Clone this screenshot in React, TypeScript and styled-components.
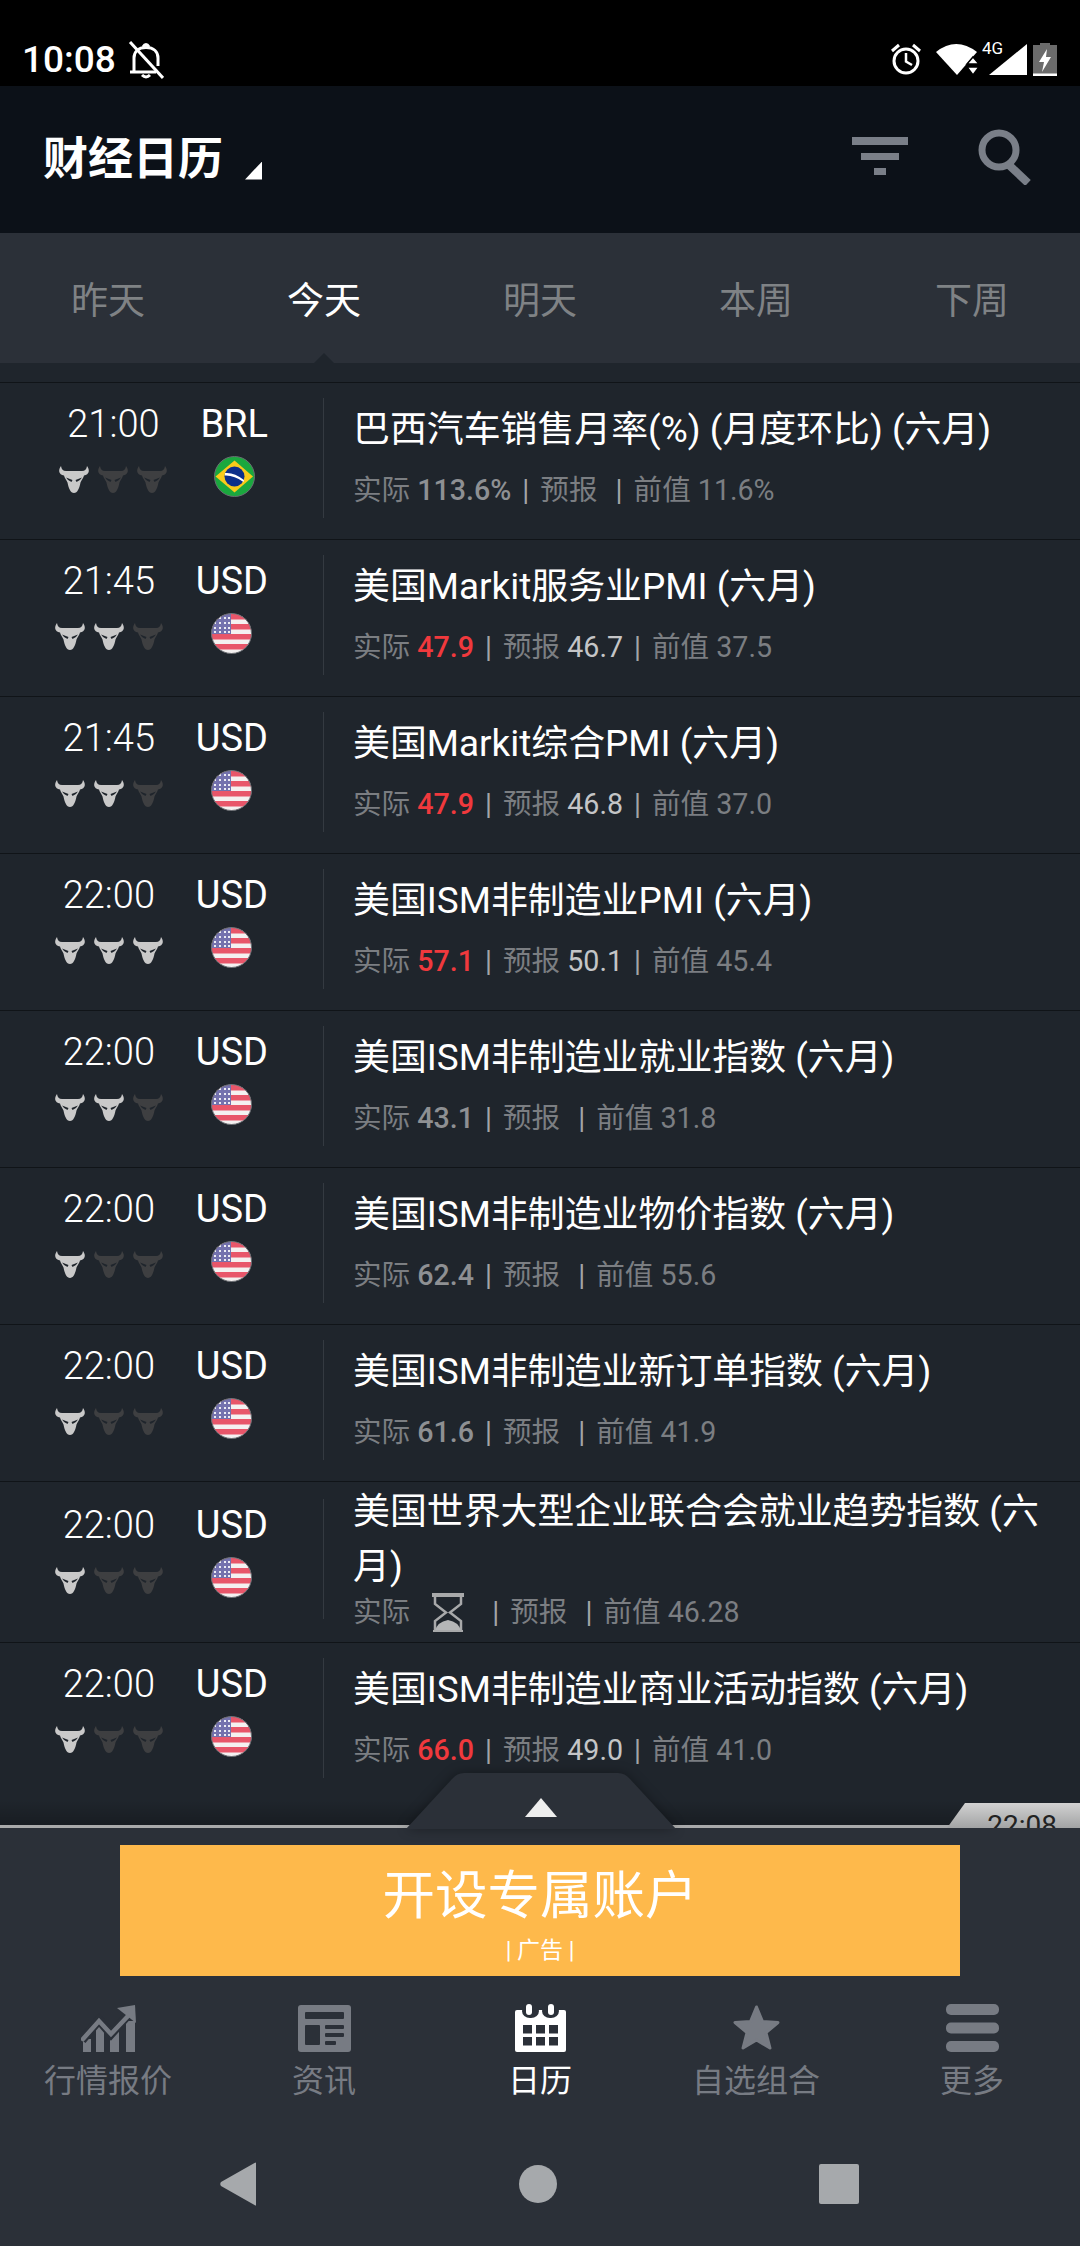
import React from 'react';
import styled, { createGlobalStyle } from 'styled-components';

const Global = createGlobalStyle`
  html, body {
    margin: 0;
    padding: 0;
    background: #000;
  }
  * {
    box-sizing: border-box;
  }
`;

const Page = styled.div`
  width: 1080px;
  height: 2246px;
  display: flex;
  flex-direction: column;
  overflow: hidden;
  background: #1f252c;
  font-family: Roboto, 'Noto Sans CJK SC', sans-serif;
`;

const StatusBar = styled.div`
  height: 86px;
  flex: none;
  background: #000;
  color: #fff;
  display: flex;
  align-items: flex-start;
  justify-content: space-between;
  padding: 41px 23px 0 22px;
`;

const StatusLeft = styled.div`
  display: flex;
  align-items: center;
  gap: 12px;
  font-size: 37px;
  font-weight: 500;
  line-height: 38px;
`;

const StatusRight = styled.div`
  display: flex;
  align-items: flex-start;
  margin-top: 1px;
`;

const Header = styled.header`
  height: 147px;
  flex: none;
  background: #0c1118;
  display: flex;
  align-items: center;
  padding: 0 48px 0 43px;
`;

const HeaderTitle = styled.h1`
  margin: 0;
  font-size: 45px;
  font-weight: 700;
  color: #fff;
  line-height: 54px;
`;

const Caret = styled.span`
  width: 17px;
  height: 18px;
  margin: 22px auto 0 22px;
  background: #fff;
  clip-path: polygon(100% 0, 100% 100%, 0 100%);
`;

const HeaderIcons = styled.div`
  display: flex;
  align-items: center;
  gap: 70px;
  margin-bottom: 5px;
`;

const DateTabs = styled.nav`
  height: 130px;
  flex: none;
  background: #2b3038;
  display: flex;
  position: relative;
`;

const DateTab = styled.div<{ $active?: boolean }>`
  flex: 1;
  display: flex;
  align-items: center;
  justify-content: center;
  font-size: 37px;
  color: ${({ $active }) => ($active ? '#fff' : '#7f8285')};
  position: relative;

  ${({ $active }) =>
    $active &&
    `&::after {
      content: '';
      position: absolute;
      bottom: 0;
      left: 50%;
      margin-left: -10px;
      width: 20px;
      height: 10px;
      background: #1f252c;
      clip-path: polygon(50% 0, 100% 100%, 0 100%);
    }`}
`;

const List = styled.div`
  flex: 1;
  min-height: 0;
  overflow: hidden;
  padding-top: 19px;
  background: #1f252c;
`;

const Row = styled.div<{ $tall?: boolean }>`
  min-height: ${({ $tall }) => ($tall ? '161px' : '157px')};
  border-top: 1px solid #101418;
  padding-bottom: 6px;
  display: flex;
  align-items: center;
`;

const Meta = styled.div`
  width: 323px;
  flex: none;
  padding-right: 55px;
  display: flex;
  justify-content: flex-end;
  gap: 32px;
`;

const MetaCol = styled.div`
  display: flex;
  flex-direction: column;
  align-items: center;
`;

const Time = styled.div`
  font-size: 38px;
  font-weight: 300;
  line-height: 44px;
  color: #fff;
`;

const Currency = styled.div`
  font-size: 38px;
  line-height: 44px;
  color: #fff;
`;

const Bulls = styled.div`
  display: flex;
  gap: 7px;
  margin-top: 20px;
  margin-bottom: 21px;
`;

const FlagWrap = styled.div`
  margin-top: 10px;
  margin-bottom: 1px;
  width: 41px;
  height: 41px;
`;

const Divider = styled.div`
  width: 1px;
  height: 120px;
  flex: none;
  background: #343a41;
`;

const Content = styled.div<{ $tall?: boolean }>`
  flex: 1;
  padding: 0 0 ${({ $tall }) => ($tall ? '5px' : '7px')} 29px;
  display: flex;
  flex-direction: column;
  gap: ${({ $tall }) => ($tall ? '0' : '15px')};
`;

const Title = styled.div`
  font-size: 36.9px;
  line-height: 55px;
  color: #fff;
  padding-right: 20px;
`;

const Sub = styled.div`
  font-size: 28.6px;
  line-height: 36px;
  color: #7b7e82;
  white-space: pre;
`;

const Val = styled.span<{ $tone?: 'red' | 'bright' | 'dim' }>`
  color: ${({ $tone }) =>
    $tone === 'red' ? '#f0393d' : $tone === 'bright' ? '#c4c5c7' : $tone === 'dim' ? '#8e9093' : '#7b7e82'};
  font-weight: ${({ $tone }) => ($tone === 'red' || $tone === 'dim' ? 500 : 400)};
`;

const Bar = styled.span`
  color: #a3a5a8;
  margin: 0 11px;
`;

const Glass = styled.svg`
  width: 32px;
  height: 39px;
  margin: -8px 17px -6px 22px;
  vertical-align: middle;
`;

const Panel = styled.div`
  height: 418px;
  flex: none;
  background: #2b3038;
  display: flex;
  flex-direction: column;
  position: relative;

  &::before {
    content: '';
    position: absolute;
    left: 0;
    right: 0;
    top: -3px;
    height: 3px;
    background: #a9aaab;
  }
  &::after {
    content: '';
    position: absolute;
    left: 0;
    right: 0;
    top: -28px;
    height: 25px;
    background: linear-gradient(rgba(0, 0, 0, 0), rgba(0, 0, 0, 0.22));
  }
`;

const Handle = styled.svg`
  position: absolute;
  top: -55px;
  left: 406px;
  width: 270px;
  height: 56px;
  z-index: 2;
  overflow: visible;
  filter: drop-shadow(0 0 6px rgba(0, 0, 0, 0.35));
`;

const ClockTag = styled.div`
  position: absolute;
  top: -25px;
  right: 0;
  width: 133px;
  height: 25px;
  overflow: hidden;
  z-index: 2;
  background: linear-gradient(#d2d2d2, #a2a3a4);
  clip-path: polygon(18px 0, 100% 0, 100% 100%, 0 100%);
  font-size: 28px;
  line-height: 34px;
  color: #222;
  padding: 6px 23px 0 0;
  text-align: right;
`;

const Ad = styled.div`
  width: 840px;
  height: 131px;
  margin: 17px auto 0;
  background: #feb94b;
  color: #fff;
  flex: none;
  display: flex;
  flex-direction: column;
  align-items: center;
`;

const AdTitle = styled.div`
  font-size: 52.5px;
  line-height: 60px;
  margin-top: 21px;
`;

const AdNote = styled.div`
  font-size: 23px;
  line-height: 24px;
  margin-top: 13px;
`;

const BottomTabs = styled.nav`
  display: flex;
  flex: none;
  padding-top: 27px;
`;

const BottomTab = styled.div<{ $active?: boolean }>`
  flex: 1;
  display: flex;
  flex-direction: column;
  align-items: center;
  color: ${({ $active }) => ($active ? '#fff' : '#777b83')};
  font-size: 32px;
  line-height: 40px;
`;

const TabIcon = styled.div`
  height: 50px;
  margin-bottom: 8px;
  display: flex;
  align-items: center;
`;

const SystemNav = styled.div`
  flex: 1;
  display: flex;
  align-items: center;
  justify-content: center;
  gap: 262px;
  padding: 21px 1px 0 0;
`;

const Bull = ({ on }: { on: boolean }) => (
  <svg width="32" height="28" viewBox="0 0 32 28">
    <path
      fill={on ? '#c9c9c9' : '#3e3f41'}
      d="M3 0C0 4 0.5 8.5 6 9.5C6.5 12 8.5 14 9.5 16.5C10.5 22 12.5 27 16 27C19.5 27 21.5 22 22.5 16.5C23.5 14 25.5 12 26 9.5C31.5 8.5 32 4 29 0C28.5 3.5 27 5 24 5L8 5C5 5 3.5 3.5 3 0Z"
    />
    <path fill="#1f252c" d="M8 11.5L14.5 14L13.5 16Q10 15 8 11.5ZM24 11.5L17.5 14L18.5 16Q22 15 24 11.5Z" />
  </svg>
);

const UsFlag = () => (
  <svg width="41" height="41" viewBox="0 0 41 41">
    <defs>
      <clipPath id="usclip">
        <circle cx="20.5" cy="20.5" r="20" />
      </clipPath>
    </defs>
    <g clipPath="url(#usclip)">
      <rect width="41" height="41" fill="#f4f1f1" />
      {[1, 11, 21, 31].map((y) => (
        <rect key={y} x="0" y={y} width="41" height="5.5" fill="#e8566a" />
      ))}
      <rect width="20" height="21" fill="#7472ae" />
      {[4, 9, 14, 18].map((y) =>
        [3, 8, 13, 17].map((x) => <rect key={`${x}-${y}`} x={x} y={y} width="2" height="2" fill="#ececf4" />)
      )}
    </g>
    <circle cx="20.5" cy="20.5" r="20" fill="none" stroke="#6a6d72" strokeWidth="1" />
  </svg>
);

const BrFlag = () => (
  <svg width="41" height="41" viewBox="0 0 41 41">
    <circle cx="20.5" cy="20.5" r="20" fill="#1aa83e" stroke="#6a6d72" strokeWidth="1" />
    <path d="M20.5 4.5L39 20.5L20.5 36.5L1.5 20.5Z" fill="#f9cb1a" />
    <circle cx="20.5" cy="20.5" r="10" fill="#0c2f8a" />
    <path d="M11 17Q20 16 30 24L29.5 26Q20 19 10.8 19.5Z" fill="#fff" />
  </svg>
);

const HourGlass = () => (
  <Glass viewBox="0 0 32 39">
    <rect x="0" y="0" width="32" height="4" fill="#a8a9aa" />
    <path d="M3 4V11L14 19.5L3 28V38M29 4V11L18 19.5L29 28V38" fill="none" stroke="#a8a9aa" strokeWidth="2.5" />
    <path d="M3 38Q5 29 16 27Q27 29 29 38Z" fill="#b5b6b7" />
    <rect x="1" y="37" width="30" height="2" fill="#a8a9aa" />
  </Glass>
);

type Item = {
  time: string;
  cur: 'BRL' | 'USD';
  level: number;
  title: string;
  actual: string;
  hot?: boolean;
  forecast?: string;
  prev: string;
  pending?: boolean;
};

const items: Item[] = [
  { time: '21:00', cur: 'BRL', level: 1, title: '巴西汽车销售月率(%) (月度环比) (六月)', actual: '113.6%', prev: '11.6%' },
  { time: '21:45', cur: 'USD', level: 2, title: '美国Markit服务业PMI (六月)', actual: '47.9', hot: true, forecast: '46.7', prev: '37.5' },
  { time: '21:45', cur: 'USD', level: 2, title: '美国Markit综合PMI (六月)', actual: '47.9', hot: true, forecast: '46.8', prev: '37.0' },
  { time: '22:00', cur: 'USD', level: 3, title: '美国ISM非制造业PMI (六月)', actual: '57.1', hot: true, forecast: '50.1', prev: '45.4' },
  { time: '22:00', cur: 'USD', level: 2, title: '美国ISM非制造业就业指数 (六月)', actual: '43.1', prev: '31.8' },
  { time: '22:00', cur: 'USD', level: 1, title: '美国ISM非制造业物价指数 (六月)', actual: '62.4', prev: '55.6' },
  { time: '22:00', cur: 'USD', level: 1, title: '美国ISM非制造业新订单指数 (六月)', actual: '61.6', prev: '41.9' },
  { time: '22:00', cur: 'USD', level: 1, title: '美国世界大型企业联合会就业趋势指数 (六月)', actual: '', prev: '46.28', pending: true },
  { time: '22:00', cur: 'USD', level: 1, title: '美国ISM非制造业商业活动指数 (六月)', actual: '66.0', hot: true, forecast: '49.0', prev: '41.0' },
];

const EventRow = ({ item }: { item: Item }) => (
  <Row $tall={item.pending}>
    <Meta>
      <MetaCol>
        <Time>{item.time}</Time>
        <Bulls>
          {[1, 2, 3].map((n) => (
            <Bull key={n} on={n <= item.level} />
          ))}
        </Bulls>
      </MetaCol>
      <MetaCol>
        <Currency>{item.cur}</Currency>
        <FlagWrap>{item.cur === 'BRL' ? <BrFlag /> : <UsFlag />}</FlagWrap>
      </MetaCol>
    </Meta>
    <Divider />
    <Content $tall={item.pending}>
      <Title>{item.title}</Title>
      <Sub>
        实际
        {item.pending ? <HourGlass /> : ' '}
        {!item.pending && <Val $tone={item.hot ? 'red' : 'dim'}>{item.actual}</Val>}
        <Bar>|</Bar>预报 {item.forecast && <Val $tone="bright">{item.forecast}</Val>}
        <Bar>|</Bar>前值 <Val>{item.prev}</Val>
      </Sub>
    </Content>
  </Row>
);

export default function App() {
  return (
    <Page>
      <Global />
      <StatusBar>
        <StatusLeft>
          10:08
          <svg width="36" height="38" viewBox="0 0 36 38" fill="none" stroke="#fff" strokeWidth="3">
            <path d="M2 31H28M6 30V17C6 11 10 6.5 18 6.5C26 6.5 30 11 30 17V25" />
            <path d="M14 34Q18 38 22 34" />
            <path d="M15 6Q18 1 21 6" />
            <path d="M2 1L35 37" />
          </svg>
        </StatusLeft>
        <StatusRight>
          <svg width="34" height="34" viewBox="0 0 34 34" fill="none" stroke="#fff" strokeWidth="3" style={{ marginRight: 13 }}>
            <circle cx="17" cy="19" r="12" />
            <path d="M17 11V19.5L23 23" strokeWidth="2.5" />
            <path d="M3 9L10 3M31 9L24 3" />
          </svg>
          <svg width="44" height="34" viewBox="0 0 44 34" style={{ marginRight: 2 }}>
            <path d="M0 10Q20 -6 41 10L21 33Z" fill="#fff" />
            <path d="M37 15L43 22H31ZM37 33L43 25H31Z" fill="#fff" stroke="#000" strokeWidth="1.5" />
          </svg>
          <svg width="48" height="34" viewBox="0 0 48 34" style={{ marginLeft: -1, overflow: 'visible' }}>
            <text x="1" y="12" fontSize="17" fill="#fff" fontFamily="Roboto, sans-serif">
              4G
            </text>
            <path d="M8 33L46 2V33Z" fill="#fff" />
          </svg>
          <svg width="24" height="34" viewBox="0 0 24 34" style={{ marginLeft: 4 }}>
            <path d="M7 1H17V3H24V32H0V3H7Z" fill="#6b6b6b" />
            <rect x="0" y="31.5" width="24" height="2.5" fill="#fff" />
            <path d="M14 7L6 20H11L9 30L18 15H13Z" fill="#fff" />
          </svg>
        </StatusRight>
      </StatusBar>

      <Header>
        <HeaderTitle>财经日历</HeaderTitle>
        <Caret />
        <HeaderIcons>
          <svg width="56" height="40" viewBox="0 0 56 40" fill="#7a7f88">
            <rect x="0" y="0" width="56" height="8" />
            <rect x="9" y="16" width="38" height="7" />
            <rect x="22" y="31" width="12" height="7" />
          </svg>
          <svg width="54" height="56" viewBox="0 0 54 56" fill="none" stroke="#7a7f88">
            <circle cx="21" cy="21" r="17" strokeWidth="7" />
            <path d="M31 36L50 54" strokeWidth="8" />
          </svg>
        </HeaderIcons>
      </Header>

      <DateTabs>
        {['昨天', '今天', '明天', '本周', '下周'].map((t) => (
          <DateTab key={t} $active={t === '今天'}>
            {t}
          </DateTab>
        ))}
      </DateTabs>

      <List>
        {items.map((item) => (
          <EventRow key={item.title} item={item} />
        ))}
      </List>

      <Panel>
        <Handle viewBox="0 0 270 56">
          <path d="M0 56L46 6Q51 0 58 0H212Q219 0 224 6L270 56Z" fill="#2b3038" />
          <path d="M119 44L135 25L151 44Z" fill="#eee" />
        </Handle>
        <ClockTag>22:08</ClockTag>
        <Ad>
          <AdTitle>开设专属账户</AdTitle>
          <AdNote>| 广告 |</AdNote>
        </Ad>
        <BottomTabs>
          <BottomTab>
            <TabIcon>
              <svg width="55" height="47" viewBox="0 0 55 47" fill="#777b83">
                <rect x="2" y="34" width="8" height="13" />
                <rect x="15" y="22" width="8" height="25" />
                <rect x="29" y="26" width="9" height="21" />
                <rect x="45" y="16" width="9" height="31" />
                <path d="M1 35L18 15L30 29L47 10" fill="none" stroke="#2b3038" strokeWidth="9" />
                <path d="M2 34L18 16L30 29L47 11" fill="none" stroke="#777b83" strokeWidth="4.5" strokeLinecap="round" />
                <path d="M36 3L54 0L55 18Z" />
              </svg>
            </TabIcon>
            行情报价
          </BottomTab>
          <BottomTab>
            <TabIcon>
              <svg width="53" height="47" viewBox="0 0 53 47">
                <rect width="53" height="47" rx="3" fill="#777b83" />
                <g fill="#2b3038">
                  <rect x="7" y="7" width="39" height="7" rx="1" />
                  <rect x="7" y="20" width="15" height="20" rx="1" />
                  <rect x="27" y="20" width="19" height="4" rx="1" />
                  <rect x="27" y="28" width="19" height="4" rx="1" />
                  <rect x="27" y="36" width="11" height="4" rx="1" />
                </g>
              </svg>
            </TabIcon>
            资讯
          </BottomTab>
          <BottomTab $active>
            <TabIcon>
              <svg width="51" height="48" viewBox="0 0 51 48">
                <path d="M2 6H49Q51 6 51 8V46Q51 48 49 48H2Q0 48 0 46V8Q0 6 2 6Z" fill="#fff" />
                <g fill="#2b3038">
                  <rect x="7" y="0" width="17" height="14" rx="8" />
                  <rect x="27" y="0" width="17" height="14" rx="8" />
                </g>
                <g fill="#fff">
                  <rect x="11" y="0" width="6" height="11" rx="3" />
                  <rect x="33" y="0" width="6" height="11" rx="3" />
                </g>
                <g fill="#2b3038">
                  {[8, 21, 34].map((x) =>
                    [21, 33].map((y) => <rect key={`${x}-${y}`} x={x} y={y} width="9" height="8.5" />)
                  )}
                </g>
              </svg>
            </TabIcon>
            日历
          </BottomTab>
          <BottomTab>
            <TabIcon>
              <svg width="47" height="46" viewBox="0 0 47 46">
                <path
                  d="M23.5 2L29.5 16.5L45 17.5L33 27.5L37 43L23.5 35L10 43L14 27.5L2 17.5L17.5 16.5Z"
                  fill="#777b83"
                  stroke="#777b83"
                  strokeWidth="3"
                  strokeLinejoin="round"
                />
              </svg>
            </TabIcon>
            自选组合
          </BottomTab>
          <BottomTab>
            <TabIcon>
              <svg width="53" height="48" viewBox="0 0 53 48" fill="#777b83">
                <rect y="0" width="53" height="11" rx="5" />
                <rect y="18.5" width="53" height="11" rx="5" />
                <rect y="37" width="53" height="11" rx="5" />
              </svg>
            </TabIcon>
            更多
          </BottomTab>
        </BottomTabs>
        <SystemNav>
          <svg width="37" height="44" viewBox="0 0 37 44" fill="#a6a9ac">
            <path d="M36 1V43Q36 44 34.5 43L1 24Q-0.5 22 1 20L34.5 1Q36 0 36 1Z" />
          </svg>
          <svg width="38" height="38" viewBox="0 0 38 38" fill="#a6a9ac">
            <circle cx="19" cy="19" r="19" />
          </svg>
          <svg width="40" height="40" viewBox="0 0 40 40" fill="#a6a9ac">
            <rect width="40" height="40" rx="2" />
          </svg>
        </SystemNav>
      </Panel>
    </Page>
  );
}
